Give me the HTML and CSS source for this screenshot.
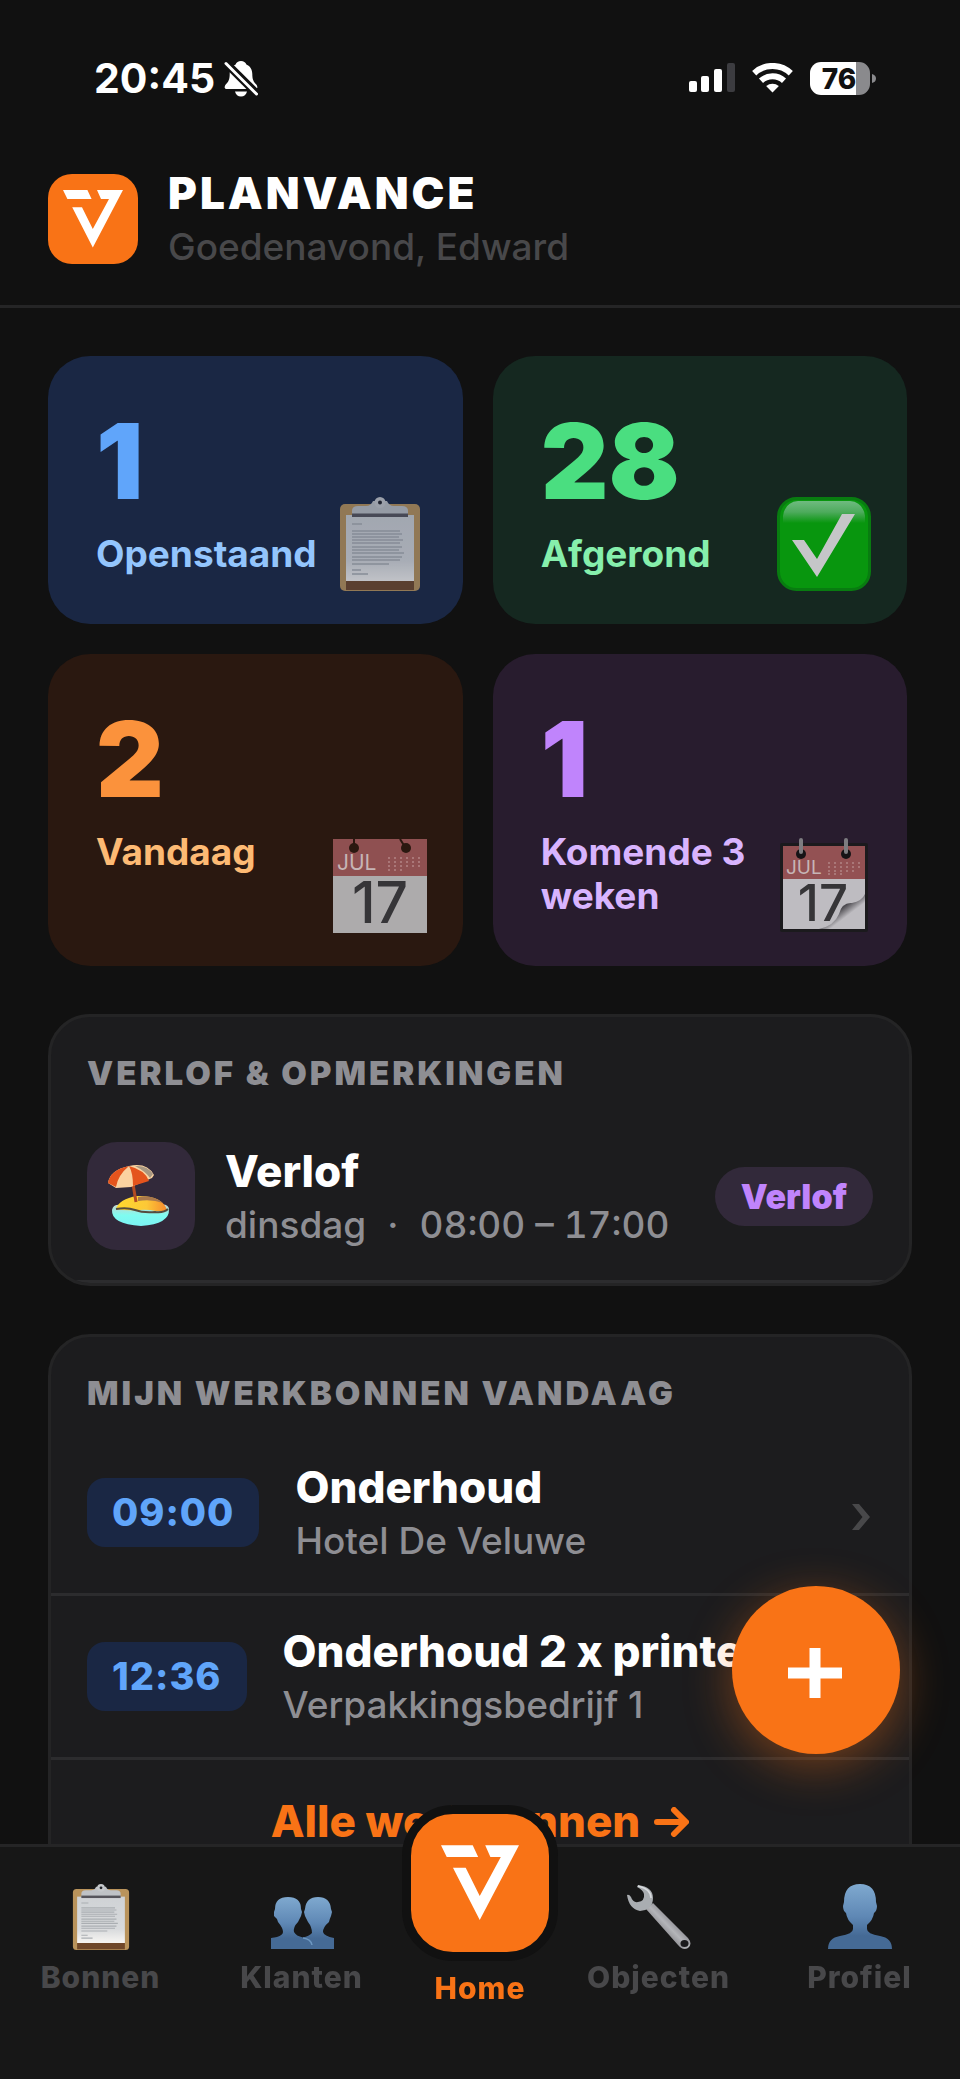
FILE: index.html
```html
<!DOCTYPE html>
<html lang="nl">
<head>
<meta charset="utf-8">
<meta name="viewport" content="width=device-width, initial-scale=1">
<title>Planvance</title>
<link rel="stylesheet" href="styles.css">
</head>
<body>
<svg class="defs" aria-hidden="true">
  <defs>
    <linearGradient id="person-fill" x1="0" y1="0" x2="0" y2="1">
      <stop offset="0" stop-color="#7fa9cf"/>
      <stop offset="0.5" stop-color="#5f88b5"/>
      <stop offset="0.8" stop-color="#456a95"/>
      <stop offset="1" stop-color="#456a95"/>
    </linearGradient>
    <linearGradient id="paper-fill" x1="0" y1="0" x2="0" y2="1">
      <stop offset="0" stop-color="#cfd2d5"/>
      <stop offset="0.7" stop-color="#d8dadc"/>
      <stop offset="1" stop-color="#f8f6f3"/>
    </linearGradient>
    <linearGradient id="gloss-fill" x1="0" y1="0" x2="0" y2="1">
      <stop offset="0" stop-color="#6fbb80"/>
      <stop offset="0.5" stop-color="#4eab5d"/>
      <stop offset="1" stop-color="#08960e"/>
    </linearGradient>
    <linearGradient id="steel-fill" x1="0" y1="1" x2="1" y2="0">
      <stop offset="0.3" stop-color="#77757a"/>
      <stop offset="0.5" stop-color="#b4b5b9"/>
      <stop offset="0.7" stop-color="#77757c"/>
    </linearGradient>
    <linearGradient id="curl-fill" x1="0" y1="0" x2="1" y2="1">
      <stop offset="0.25" stop-color="#a5a3a8"/>
      <stop offset="0.45" stop-color="#4c4a4f"/>
      <stop offset="0.62" stop-color="#bebcc1"/>
    </linearGradient>
    <linearGradient id="sand-fill" x1="0" y1="0" x2="1" y2="0">
      <stop offset="0" stop-color="#ffd92e"/>
      <stop offset="0.6" stop-color="#fcc837"/>
      <stop offset="1" stop-color="#f58a2e"/>
    </linearGradient>
    <linearGradient id="sea-fill" x1="0" y1="0" x2="0" y2="1">
      <stop offset="0" stop-color="#c9d3cf"/>
      <stop offset="0.5" stop-color="#7ffcf0"/>
      <stop offset="1" stop-color="#7cf3f4"/>
    </linearGradient>
    <symbol id="logo-mark" viewBox="0 0 60 58">
      <path fill="#fff" d="M0 0H24.4L28.6 9H4.4ZM34 0H60L29.8 57.5 9.2 17.2H19L29.8 39 46 9H38Z"/>
    </symbol>
    <symbol id="clipboard" viewBox="0 0 94 94">
      <rect x="7" y="7" width="80" height="87" rx="5" fill="#b9935b"/>
      <rect x="13" y="84" width="68" height="9" fill="#70482a"/>
      <rect x="13" y="18" width="68" height="66" fill="url(#paper-fill)"/>
      <path d="M19 27h10M19 34h48M19 37h50M19 40h47M19 43h51M19 46h48M19 50h50M19 53h47M19 56h52M19 60h50M19 63h48M19 67h37M19 73h9M19 77h16" stroke="#aaaeb2" stroke-width="1.6"/>
      <path d="M19 18v-4q0-5 6-5h8q5 0 7-5h14q2 5 7 5h8q6 0 6 5v4z" fill="#bfc2c6"/>
      <rect x="19" y="16.500" width="56" height="3.500" fill="#56555c"/>
      <circle cx="47" cy="5.500" r="5.500" fill="#c6c9cc"/>
      <circle cx="47" cy="5.500" r="2" fill="#23242b"/>
    </symbol>
  </defs>
</svg>

<div class="status-bar">
  <div class="status-left">
    <span class="clock">20:45</span>
    <svg class="bell" width="34" height="37" viewBox="0 0 34 37" aria-hidden="true">
      <path fill="#fff" d="M17 1c-2.600 0-4.600 1.300-5.400 3.500C7.800 6.200 5.700 9.700 5.700 14c0 5.600-1.200 7.600-4 10.600C.2 26.400 0 29 3 29h28c3 0 2.800-2.600 1.300-4.400-2.800-3-4-5-4-10.600 0-4.300-2.100-7.800-5.900-9.500C21.600 2.300 19.600 1 17 1ZM11 31.500h12c-.6 3-3 5-6 5s-5.400-2-6-5Z"/>
      <path stroke="#111" stroke-width="8" d="M2 3l31 31"/>
      <path stroke="#fff" stroke-width="3" stroke-linecap="round" d="M2 3.500l30.500 30.500"/>
    </svg>
  </div>
  <div class="status-right">
    <svg width="46" height="30" viewBox="0 0 46 30" aria-hidden="true">
      <g fill="#fff"><rect y="18" width="8" height="11" rx="2"/><rect x="12" y="13" width="8" height="16" rx="2"/><rect x="25" y="6" width="8" height="23" rx="2"/></g>
      <rect x="38" width="8" height="29" rx="2" fill="#3c3c40"/>
    </svg>
    <svg width="41" height="30" viewBox="0 0 41 30" aria-hidden="true">
      <path fill="none" stroke="#fff" stroke-width="6" d="M2.200 10.200C12.500.5 28.500.5 38.800 10.200M9 17.800c6.500-6 16.500-6 23 0"/>
      <path fill="#fff" d="M20.500 29.500l-6.400-6.400c3.600-3.300 9.200-3.300 12.800 0z"/>
    </svg>
    <svg width="66" height="33" viewBox="0 0 66 33" role="img" aria-label="Batterij 76%">
      <path fill="#fff" d="M11 0h35v33H11A11 11 0 0 1 0 22V11A11 11 0 0 1 11 0Z"/>
      <path fill="#8a8a8d" d="M46 0h3a11 11 0 0 1 11 11v11a11 11 0 0 1-11 11h-3zM62 12q4 1 4 4.500T62 21z"/>
      <text class="battery-level" x="29" y="27" text-anchor="middle">76</text>
    </svg>
  </div>
</div>

<header class="app-header">
  <div class="app-logo"><svg width="60" height="58" aria-hidden="true"><use href="#logo-mark"/></svg></div>
  <div class="app-titles">
    <h1 class="app-name">PLANVANCE</h1>
    <p class="greeting">Goedenavond, Edward</p>
  </div>
</header>

<main class="content">
  <section class="stats">
    <a class="stat stat-open" href="#openstaand">
      <span class="stat-value">1</span>
      <span class="stat-label">Openstaand</span>
      <svg class="stat-icon faded" aria-hidden="true"><use href="#clipboard"/></svg>
    </a>
    <a class="stat stat-done" href="#afgerond">
      <span class="stat-value">28</span>
      <span class="stat-label">Afgerond</span>
      <svg class="stat-icon" viewBox="0 0 94 94" aria-hidden="true">
        <rect x="1.500" y="1.500" width="91" height="91" rx="18" fill="#08960e" stroke="#087c10" stroke-width="3"/>
        <path d="M6 26V19Q8 5 21 4H73Q86 5 88 19V26Z" fill="url(#gloss-fill)"/>
        <path d="M15 43H27L40 62 65 17H78L40 80Z" fill="#c5c6c8"/>
      </svg>
    </a>
    <a class="stat stat-today" href="#vandaag">
      <span class="stat-value">2</span>
      <span class="stat-label">Vandaag</span>
      <svg class="stat-icon" viewBox="0 0 94 94" aria-hidden="true">
        <rect width="94" height="94" fill="#adabac"/>
        <rect width="94" height="37" fill="#8f5051"/>
        <path d="M21 0v8M67 0l5 8" stroke="#2a1810" stroke-width="2"/>
        <circle cx="21" cy="9" r="5" fill="#2a1810"/><circle cx="73" cy="9" r="5" fill="#2a1810"/>
        <path d="M55 19h34M55 23h34M55 27h34M55 31h16" stroke="#aa7778" stroke-width="2" stroke-dasharray="2 4"/>
        <text class="cal-month" x="4" y="31" font-size="21">JUL</text>
        <text class="cal-day" x="47" y="84" font-size="57" text-anchor="middle">17</text>
      </svg>
    </a>
    <a class="stat stat-coming" href="#komend">
      <span class="stat-value">1</span>
      <span class="stat-label">Komende 3 weken</span>
      <svg class="stat-icon" viewBox="0 0 94 94" aria-hidden="true">
        <rect x="3" y="4" width="88" height="89" rx="2" fill="#1b1a1d"/>
        <rect x="6" y="7" width="82" height="83" fill="#bebcc1"/>
        <rect x="6" y="7" width="82" height="33" fill="#935153"/>
        <circle cx="24" cy="15" r="5" fill="#151316"/><circle cx="69" cy="15" r="5" fill="#151316"/>
        <path d="M24 1v12M69 1v12" stroke="#7d7c80" stroke-width="4" stroke-linecap="round"/>
        <path d="M51 24h34M51 28h34M51 32h30M51 35h18" stroke="#aa7778" stroke-width="2" stroke-dasharray="2 4"/>
        <text class="cal-month" x="9" y="35" font-size="19">JUL</text>
        <text class="cal-day" x="46" y="82" font-size="51" text-anchor="middle">17</text>
        <path d="M42 90Q57 87 62 75 65 63 75 64 85 62 88 55V90Z" fill="url(#curl-fill)"/>
      </svg>
    </a>
  </section>

  <section class="panel">
    <h2 class="panel-title">VERLOF &amp; OPMERKINGEN</h2>
    <div class="row row-leave">
      <div class="leave-icon">
        <svg width="66" height="66" viewBox="0 0 66 66" aria-hidden="true">
          <path d="M4 47Q5 41 13 42H51Q60 40 61 46 62 61 33 63 3 61 4 47Z" fill="url(#sea-fill)"/>
          <path d="M8 46Q11 36 29 33 54 32 59 47 54 49 48 48 39 46 31 47 17 48 8 46Z" fill="url(#sand-fill)"/>
          <path d="M8 46Q19 44 27 47T47 49Q56 50 60 46" fill="none" stroke="#554c3e" stroke-width="2"/>
          <path d="M30 34Q44 31 55 40 44 36 30 38Z" fill="#a9794c"/>
          <path d="M25 21L28 39" stroke="#b44c22" stroke-width="3"/>
          <path d="M21 3Q39-1 46 12L44 15 23 24 8 25 0 20Q2 7 21 3Z" fill="#fbd2a0"/>
          <path d="M21 3Q2 7 0 20L8 24Q10 12 21 3ZM21 3Q25 10 25 23L41 18Q37 7 21 3Z" fill="#e4541d"/>
          <path d="M27 3Q39 2 45 11L42 15Q37 8 27 3Z" fill="#a79781"/>
        </svg>
      </div>
      <div class="row-text">
        <h3 class="row-title">Verlof</h3>
        <p class="row-sub"><span>dinsdag</span><span>·</span><span class="hours">08:00 – 17:00</span></p>
      </div>
      <span class="badge">Verlof</span>
    </div>
  </section>

  <section class="panel">
    <h2 class="panel-title">MIJN WERKBONNEN VANDAAG</h2>
    <a class="row row-job" href="#bon-1">
      <time class="time-pill">09:00</time>
      <div class="row-text">
        <h3 class="row-title">Onderhoud</h3>
        <p class="row-sub">Hotel De Veluwe</p>
      </div>
      <svg class="chevron" width="18" height="26" viewBox="0 0 18 26" aria-hidden="true"><path fill="#48484a" d="M0 0H7L18 13 7 26H0L10.500 13Z"/></svg>
    </a>
    <a class="row row-job" href="#bon-2">
      <time class="time-pill">12:36</time>
      <div class="row-text">
        <h3 class="row-title">Onderhoud 2 x printer</h3>
        <p class="row-sub">Verpakkingsbedrijf 1</p>
      </div>
      <svg class="chevron" width="18" height="26" viewBox="0 0 18 26" aria-hidden="true"><path fill="#48484a" d="M0 0H7L18 13 7 26H0L10.500 13Z"/></svg>
    </a>
    <a class="all-link" href="#werkbonnen">Alle werkbonnen
      <svg width="35" height="30" viewBox="0 0 35 30" aria-hidden="true"><path d="M3 15H31M20 3L32 15 20 27" fill="none" stroke="#f97316" stroke-width="6" stroke-linecap="round" stroke-linejoin="round"/></svg>
    </a>
  </section>
</main>

<button class="fab" type="button" aria-label="Nieuw">
  <svg width="54" height="54" viewBox="0 0 54 54" aria-hidden="true"><path d="M27 2V52M0 27H54" stroke="#fff" stroke-width="11"/></svg>
</button>

<nav class="tab-bar">
  <a class="tab" href="#bonnen">
    <svg class="tab-icon" aria-hidden="true"><use href="#clipboard"/></svg>
    <span class="tab-label">Bonnen</span>
  </a>
  <a class="tab" href="#klanten">
    <svg class="tab-icon" viewBox="0 0 66 66" aria-hidden="true">
      <path fill="url(#person-fill)" d="M2 65V54Q2 54 8 53 14 51 14 48 14 44 9 38 8 34 5 32L5 28 6 25Q6 13 19 13T32 25L33 28 32 32Q31 34 29 38 24 43 25 48 27 52 34 53.500 40 52 43 49 43 43 39 38 37 34 36 32L35 28 36 25Q37 13 49 13T62 25L63 28 62 32Q61 34 60 38 54 43 54 48 55 52 65 54V65Z"/>
      <path d="M34 54Q42 55 43 61" fill="none" stroke="#6d98c2" stroke-width="1.500"/>
    </svg>
    <span class="tab-label">Klanten</span>
  </a>
  <a class="tab tab-home" href="#home" aria-current="page">
    <span class="home-tile"><svg width="78" height="76" aria-hidden="true"><use href="#logo-mark"/></svg></span>
    <span class="tab-label">Home</span>
  </a>
  <a class="tab" href="#objecten">
    <svg class="tab-icon" viewBox="0 0 66 66" aria-hidden="true">
      <path fill="url(#steel-fill)" d="M20 25L27 19 62 54Q67 60 62 64 57 67 52 61Z"/>
      <path fill="#a9adb1" d="M12 1Q27 3 27 14 27 20 23 24 19 27 14 27 3 25 1 11 3 10 5 13 7 19 12 18 19 17 18 10 17 6 11 3Z"/>
      <path d="M12 2Q25 5 25 14" fill="none" stroke="#d9dcdf" stroke-width="1.500"/>
      <ellipse cx="58.500" cy="59.500" rx="4" ry="3.500" fill="#1a1a1c"/>
    </svg>
    <span class="tab-label">Objecten</span>
  </a>
  <a class="tab" href="#profiel">
    <svg class="tab-icon" viewBox="0 0 66 66" aria-hidden="true">
      <path fill="url(#person-fill)" d="M1 65Q1 54 13 52 26 50 26 45V41Q20 36 19 29 16 27 16 22L17 18Q17 0 33 0T49 18L50 22Q50 27 47 29 46 36 40 41V45Q40 50 53 52 65 54 65 65Z"/>
    </svg>
    <span class="tab-label">Profiel</span>
  </a>
</nav>
</body>
</html>
```
FILE: styles.css
```css
* {
  box-sizing: border-box;
  margin: 0;
  padding: 0;
}

body {
  min-height: 100vh;
  background: #111;
  color: #fff;
  font-family: Inter, "Liberation Sans", sans-serif;
  font-size: 37px;
  line-height: 44px;
}

a {
  color: inherit;
  text-decoration: none;
}

svg {
  display: block;
  flex-shrink: 0;
}

.defs {
  position: absolute;
  width: 0;
  height: 0;
}

/* Status bar */
.status-bar {
  display: flex;
  align-items: center;
  justify-content: space-between;
  height: 156px;
  padding: 0 84px 0 94px;
}

.status-left {
  display: flex;
  align-items: center;
  gap: 9px;
}

.clock {
  font-size: 41px;
  font-weight: 700;
}

.status-right {
  display: flex;
  align-items: center;
  gap: 17px;
}

.battery-level {
  fill: #111;
  font-size: 28px;
  font-weight: 800;
}

/* Header */
.app-header {
  display: flex;
  align-items: center;
  gap: 30px;
  padding: 12px 48px 36px;
  border-bottom: 3px solid #252526;
}

.app-logo {
  display: flex;
  align-items: center;
  justify-content: center;
  width: 90px;
  height: 90px;
  border-radius: 24px;
  background: #f97316;
}

.app-name {
  font-size: 44px;
  font-weight: 900;
  line-height: 51px;
  letter-spacing: 3px;
}

.greeting {
  margin-top: 6px;
  color: #48484a;
  font-weight: 500;
}

/* Content */
.content {
  display: flex;
  flex-direction: column;
  gap: 48px;
  padding: 48px 48px 0;
}

.stats {
  display: flex;
  flex-wrap: wrap;
  gap: 30px;
}

.stat {
  position: relative;
  display: flex;
  flex-direction: column;
  gap: 14px;
  width: 48%;
  padding: 48px;
  border-radius: 42px;
}

.stat-value {
  font-size: 105px;
  font-weight: 900;
  line-height: 114px;
}

.stat-label {
  max-width: 240px;
  font-weight: 700;
}

.stat-icon {
  position: absolute;
  right: 36px;
  bottom: 33px;
  width: 94px;
  height: 94px;
  overflow: visible;
}

.faded {
  opacity: 0.75;
}

.stat-open { background: #1a2744; color: #93c5fd; }
.stat-open .stat-value { color: #60a5fa; }
.stat-done { background: #152820; color: #86efac; }
.stat-done .stat-value { color: #4ade80; }
.stat-today { background: #2a1810; color: #fdba74; }
.stat-today .stat-value { color: #fb923c; }
.stat-coming { background: #281c2e; color: #d8b4fe; }
.stat-coming .stat-value { color: #c084fc; }

.cal-month { fill: #c6b5b6; }
.cal-day { fill: #363538; font-weight: 500; }

/* Panels */
.panel {
  overflow: hidden;
  border: 3px solid #242425;
  border-radius: 42px;
  background: #1c1c1e;
}

.panel-title {
  padding: 36px 36px 18px;
  color: #8e8e93;
  font-size: 33px;
  font-weight: 900;
  line-height: 41px;
  letter-spacing: 3px;
}

.row {
  display: flex;
  align-items: center;
  padding: 30px 36px;
  border-bottom: 3px solid #2c2c2e;
}

.row-leave { gap: 30px; }
.row-job { gap: 36px; }

.row-text {
  flex: 1;
  min-width: 0;
}

.row-title {
  overflow: hidden;
  font-size: 44px;
  font-weight: 800;
  line-height: 51px;
  text-overflow: ellipsis;
  white-space: nowrap;
}

.row-sub {
  display: flex;
  gap: 21px;
  margin-top: 6px;
  color: #8e8e93;
  font-weight: 500;
  white-space: nowrap;
}

.hours {
  font-variant-numeric: tabular-nums;
}

.leave-icon {
  display: flex;
  align-items: center;
  justify-content: center;
  width: 108px;
  height: 108px;
  border-radius: 30px;
  background: #32293a;
}

.badge {
  padding: 9px 26px;
  border-radius: 30px;
  background: #32293a;
  color: #c084fc;
  font-size: 34px;
  font-weight: 900;
  line-height: 41px;
}

.time-pill {
  padding: 12px 25px;
  border-radius: 18px;
  background: #1a2744;
  color: #60a5fa;
  font-size: 38px;
  font-weight: 800;
  line-height: 45px;
  letter-spacing: 1px;
}

.chevron {
  margin: 9px 3px 0 0;
}

.all-link {
  display: flex;
  align-items: center;
  justify-content: center;
  gap: 14px;
  padding: 36px;
  color: #f97316;
  font-size: 44px;
  font-weight: 800;
  line-height: 51px;
}

/* Floating action button */
.fab {
  position: fixed;
  right: 60px;
  bottom: 325px;
  display: flex;
  align-items: center;
  justify-content: center;
  width: 168px;
  height: 168px;
  padding: 6px 3px 0 0;
  border: 0;
  border-radius: 50%;
  background: #f97316;
  box-shadow: 0 12px 48px rgba(249, 115, 22, 0.4);
}

/* Tab bar */
.tab-bar {
  position: fixed;
  right: 0;
  bottom: 0;
  left: 0;
  display: flex;
  align-items: flex-start;
  height: 235px;
  border-top: 3px solid #252526;
  background: #171717;
}

.tab {
  display: flex;
  flex: 1;
  flex-direction: column;
  align-items: center;
  gap: 9px;
  padding-top: 37px;
  color: #48484a;
}

.tab-icon {
  width: 66px;
  height: 66px;
}

.tab-label {
  font-size: 30px;
  font-weight: 800;
  line-height: 36px;
  letter-spacing: 1px;
}

.tab-home {
  flex: none;
  width: 156px;
  margin-top: -42px;
  padding-top: 0;
  color: #f97316;
}

.home-tile {
  display: flex;
  align-items: center;
  justify-content: center;
  width: 156px;
  height: 156px;
  border: 9px solid #111;
  border-radius: 51px;
  background: #f97316;
}
```
